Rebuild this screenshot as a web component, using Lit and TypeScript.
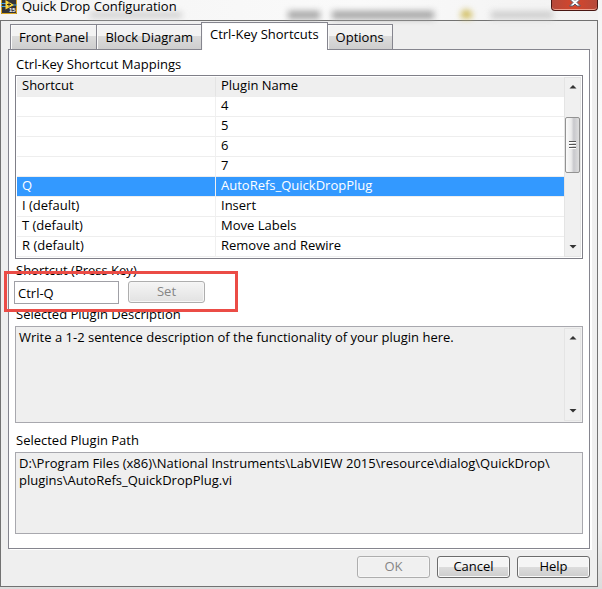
import { LitElement, html, css, svg } from "lit";
import { customElement, property, state } from "lit/decorators.js";
import { classMap } from "lit/directives/class-map.js";

const base = css`
  * { box-sizing: border-box; }
  button, input, textarea { font: inherit; color: inherit; margin: 0; }
`;

@customElement("scroll-rail")
class ScrollRail extends LitElement {
  @property({ type: Boolean }) thumb = false;

  static styles = [base, css`
    :host {
      display: flex; flex-direction: column; align-items: center;
      justify-content: space-between; width: 17px; flex: none;
      padding: 5px 0; background: #f0f0f0; border: 1px solid #e4e4e4;
      position: relative; box-sizing: border-box;
    }
    svg { display: block; }
    .thumb {
      position: absolute; top: 22%; left: 0; width: 15px; height: 56px;
      border: 1px solid #929292; border-radius: 2px;
      background: linear-gradient(90deg, #fafafa 0%, #ebebeb 40%, #c8c8cc 60%, #dedede 100%);
      display: grid; place-items: center;
    }
  `];

  render() {
    const arrow = (d: string) => svg`<path d=${d} fill="#333" />`;
    return html`
      <svg width="8" height="8" viewBox="0 0 8 8">${arrow("M4 2 7.500 5.500H.5Z")}</svg>
      ${this.thumb ? html`
        <div class="thumb">
          <svg width="7" height="9" viewBox="0 0 7 9">
            <path d="M0 1.500h7M0 4.500h7M0 7.500h7" stroke="#fff" />
            <path d="M0 .5h7M0 3.500h7M0 6.500h7" stroke="#555" />
          </svg>
        </div>` : ""}
      <svg width="8" height="8" viewBox="0 0 8 8">${arrow("M.5 2H7.500L4 5.500Z")}</svg>
    `;
  }
}

@customElement("app-root")
class AppRoot extends LitElement {
  @state() selected = 4;

  tabs = ["Front Panel", "Block Diagram", "Ctrl-Key Shortcuts", "Options"];
  rows = [
    ["", "4"], ["", "5"], ["", "6"], ["", "7"],
    ["Q", "AutoRefs_QuickDropPlug"],
    ["I (default)", "Insert"],
    ["T (default)", "Move Labels"],
    ["R (default)", "Remove and Rewire"],
  ];

  static styles = [base, css`
    :host {
      display: block; min-height: 100vh; box-sizing: border-box;
      padding: 0 4px 2px 0;
      background: linear-gradient(#f4f4f4, #fcfcfc 30%, #f0f0f0 90%, #dcdcdc);
      font: 13px/17px "Open Sans", "Noto Sans", sans-serif; color: #000;
    }
    .titlebar {
      display: flex; align-items: flex-start; height: 20px; padding-left: 1px; gap: 5px;
      position: relative;
      background: linear-gradient(90deg, #f4f4f4, #fafafa 60%, #f2f2f2);
    }
    .titlebar h1 { margin: 0; font: inherit; line-height: 12px; }
    .titlebar svg { display: block; flex: none; }
    .smudges { position: absolute; inset: 0; width: 100%; height: 20px; filter: blur(3px); }
    .titlebar > .logo, .titlebar > h1, .close { position: relative; }
    .close {
      margin-left: auto; width: 47px; height: 11px; padding: 0;
      border: 1px solid #4a1713; border-top: 0; border-radius: 0 0 4px 4px;
      background: linear-gradient(90deg, #b5493b, #d5452b 50%, #b5493b);
      box-shadow: inset 0 -1px #eda08f; display: flex; justify-content: center;
    }
    .window { border: 1px solid #727272; background: #efefef; padding: 1px 7px 8px; }
    .tabs { display: flex; align-items: flex-end; padding-left: 2px; }
    .tab {
      height: 25px; padding: 0 8px; border: 1px solid #85858e; border-bottom: 0;
      border-right-width: 0; white-space: nowrap;
      background: linear-gradient(#f3f3f3 0 45%, #dcdcdc 46%, #cecece);
      box-shadow: inset 1px 1px #fafafa;
    }
    .tab:last-child { border-right-width: 1px; }
    .tab.active {
      height: 28px; margin-bottom: -1px; padding-bottom: 4px; background: #fff;
      border-right-width: 1px; margin-right: -1px; position: relative;
    }
    .panel {
      border: 1px solid #85858e; background: #fff; padding: 6px 6px 14px;
      box-shadow: 2px 1px #fff;
    }
    .label { display: block; padding: 0 1px; }
    .list {
      display: flex; border: 1px solid #7f7f88; padding: 1px; margin-top: 2px;
    }
    table { flex: 1; border-collapse: separate; border-spacing: 0; table-layout: fixed; min-width: 0; }
    .first { width: 198px; }
    th, td {
      height: 20px; padding: 0 5px 2px; text-align: left; font-weight: 400; line-height: 17px;
      border-bottom: 1px solid #eeeeee; white-space: nowrap;
    }
    th { background: #efefef; }
    th + th, td + td { border-left: 1px solid #f0f0f0; }
    thead th + th { border-left-color: #e4e4e4; }
    .selected td { background: #3399ff; color: #fff; }
    .shortcut { position: relative; padding-top: 3px; }
    .highlight {
      position: absolute; left: -11px; top: 12px; width: 234px; height: 41px;
      border: 3px solid #eb4c46; pointer-events: none;
    }
    .entry { display: flex; align-items: flex-start; gap: 9px; padding: 2px 0 2px; margin-left: -1px; }
    .key { width: 105px; height: 23px; padding: 0 3px; border: 1px solid #a0a0a6; background: #fff; }
    .btn {
      width: 73px; height: 22px; padding: 0 0 1px; border: 1px solid #6c6c6c; border-radius: 3px;
      background: linear-gradient(#f5f5f5 0 48%, #dddddd 50%, #cdcdcd);
      box-shadow: inset 0 0 0 1px #fafafa;
    }
    .btn:disabled { border-color: #aeaeae; color: #858585; background: #f0f0f0; box-shadow: inset 0 0 0 1px #f6f6f6; }
    .btn.set { width: 77px; }
    .btn.set:disabled { background: linear-gradient(#f5f5f5, #e2e2e2); }
    .readout {
      display: flex; border: 1px solid #a8a8ae; background: #efefef; padding: 1px; margin: 3px 0 9px;
    }
    .readout textarea {
      flex: 1; min-width: 0; border: 0; padding: 1px 2px; background: none; resize: none; overflow: hidden;
      outline: 0; display: block;
    }
    .description { height: 93px; }
    .path { height: 78px; }
    .readout:last-child { margin-bottom: 0; }
    .actions { display: flex; justify-content: flex-end; gap: 7px; padding-top: 7px; }
  `];

  render() {
    return html`
      <header class="titlebar">
        <svg class="smudges" aria-hidden="true">
          <path d="M90 15h92" stroke="#c8c8c8" stroke-width="5" />
          <path d="M288 15h32M332 15h102" stroke="#a4a4a4" stroke-width="8" />
          <path d="M461 18v-5l5-4 6 4v5z" fill="#cdb850" />
          <path d="M491 15h62" stroke="#cacaca" stroke-width="7" />
        </svg>
        <svg class="logo" width="16" height="14" viewBox="0 0 16 14">
          <path d="M0 0h16v14H0z" fill="#333438" />
          <path d="M.5 0v13.500h15V0" fill="none" stroke="#d9a520" />
          <path d="M0 3.500h5M0 6.500h5M11 5h5" stroke="#4aa5df" />
          <path d="M4.500 0 13 5 4.500 9.500z" fill="#ffd83c" />
          <path d="M6 4.500h4M8 2.500v4" stroke="#333" />
          <text x="8" y="12" font-size="6" font-weight="700" fill="#fff" font-family="Liberation Sans, sans-serif">15</text>
        </svg>
        <h1>Quick Drop Configuration</h1>
        <button class="close" aria-label="Close">
          <svg width="14" height="8" viewBox="0 0 14 8">
            <path d="M3-1 7 0l4-1 .5 1L9 2.500 12.500 6H9L7 4 5 6H1.500L5 2.500 2.500 0z" fill="#fff" stroke="#56586a" />
          </svg>
        </button>
      </header>
      <main class="window">
        <nav class="tabs" role="tablist">
          ${this.tabs.map((t, i) => html`
            <button role="tab" aria-selected=${i === 2} class=${classMap({ tab: true, active: i === 2 })}>${t}</button>`)}
        </nav>
        <section class="panel">
          <span class="label" id="mappings">Ctrl-Key Shortcut Mappings</span>
          <div class="list">
            <table aria-labelledby="mappings">
              <thead><tr><th class="first">Shortcut</th><th>Plugin Name</th></tr></thead>
              <tbody>
                ${this.rows.map((r, i) => html`
                  <tr class=${classMap({ selected: i === this.selected })} @click=${() => (this.selected = i)}>
                    <td>${r[0]}</td><td>${r[1]}</td>
                  </tr>`)}
              </tbody>
            </table>
            <scroll-rail thumb></scroll-rail>
          </div>
          <div class="shortcut">
            <label class="label" for="key">Shortcut (Press Key)</label>
            <div class="entry">
              <input class="key" id="key" value="Ctrl-Q" />
              <button class="btn set" disabled>Set</button>
            </div>
            <div class="highlight"></div>
          </div>
          <label class="label" for="description">Selected Plugin Description</label>
          <div class="readout">
            <textarea class="description" id="description" readonly .value=${"Write a 1-2 sentence description of the functionality of your plugin here."}></textarea>
            <scroll-rail></scroll-rail>
          </div>
          <label class="label" for="path">Selected Plugin Path</label>
          <div class="readout">
            <textarea class="path" id="path" readonly .value=${"D:\\Program Files (x86)\\National Instruments\\LabVIEW 2015\\resource\\dialog\\QuickDrop\\\nplugins\\AutoRefs_QuickDropPlug.vi"}></textarea>
          </div>
        </section>
        <footer class="actions">
          <button class="btn" disabled>OK</button>
          <button class="btn">Cancel</button>
          <button class="btn">Help</button>
        </footer>
      </main>
    `;
  }
}
